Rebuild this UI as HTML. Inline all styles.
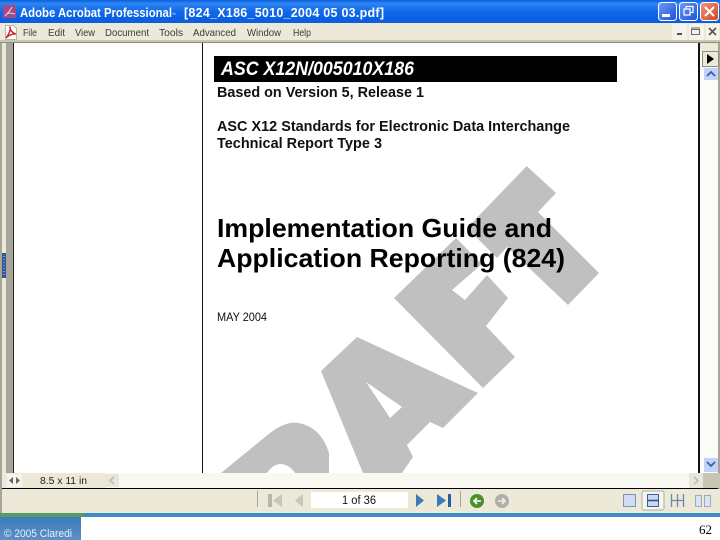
<!DOCTYPE html>
<html><head><meta charset="utf-8"><style>
html,body{margin:0;padding:0;background:#fff;width:720px;height:540px;overflow:hidden}
svg{display:block;filter:blur(.3px)}
text{font-family:"Liberation Sans",sans-serif}
</style></head><body>
<svg width="720" height="540" viewBox="0 0 720 540" xmlns="http://www.w3.org/2000/svg">
<defs>
<linearGradient id="tb" x1="0" y1="0" x2="0" y2="1"><stop offset="0" stop-color="#0a5fe0"/><stop offset=".15" stop-color="#2f86f2"/><stop offset=".5" stop-color="#0f68ea"/><stop offset="1" stop-color="#0a5cdc"/></linearGradient>
<linearGradient id="foot" x1="0" y1="0" x2="0" y2="1"><stop offset="0" stop-color="#3a7ec0"/><stop offset="1" stop-color="#5f8fc4"/></linearGradient>
<linearGradient id="btn" x1="0" y1="0" x2="1" y2="1"><stop offset="0" stop-color="#6d9cf5"/><stop offset="1" stop-color="#1e4fd8"/></linearGradient>
<linearGradient id="red" x1="0" y1="0" x2="1" y2="1"><stop offset="0" stop-color="#f0977a"/><stop offset="1" stop-color="#d0431f"/></linearGradient>
<clipPath id="may"><rect x="210" y="305" width="70" height="16"/></clipPath>
</defs>
<rect width="720" height="540" fill="#fff"/>
<!-- title bar -->
<rect width="720" height="23" fill="url(#tb)"/>
<rect x="3" y="5" width="13" height="13" fill="#a04a88"/>
<path d="M5 16C9 12 11 9 12 7M7 13C10 13 13 13 15 14" stroke="#f4d0d8" fill="none"/>
<text x="20" y="17" font-size="12.500" font-weight="bold" fill="#fff" textLength="152" lengthAdjust="spacingAndGlyphs">Adobe Acrobat Professional</text>
<text x="172" y="17" font-size="12.500" font-weight="bold" fill="#7fb0f0">-</text>
<text x="184" y="17" font-size="12.500" font-weight="bold" fill="#fff" textLength="200" lengthAdjust="spacing">[824_X186_5010_2004 05 03.pdf]</text>
<rect x="658.500" y="2.500" width="18" height="18" rx="3" fill="url(#btn)" stroke="#fff"/>
<rect x="662" y="14" width="8" height="3" fill="#fff"/>
<rect x="679.500" y="2.500" width="18" height="18" rx="3" fill="url(#btn)" stroke="#fff"/>
<path d="M684 9h6v6h-6zM686 9V6.500h7v6h-3" fill="none" stroke="#fff" stroke-width="1.200"/>
<rect x="700.500" y="2.500" width="18" height="18" rx="3" fill="url(#red)" stroke="#fff"/>
<path d="M705 7l9 9M714 7l-9 9" stroke="#fff" stroke-width="2"/>
<!-- menu bar -->
<rect y="23" width="720" height="19" fill="#ece9d8"/>
<rect y="40" width="720" height="2" fill="#c9c6b4"/>
<rect y="42" width="720" height="1" fill="#8f8c7c"/>
<path d="M5.500 25.500h8l3 3v11h-11z" fill="#fff" stroke="#b9b4a8"/>
<path d="M6 38C9 34 11 30 10 26.500 9.500 29 12 33 16 34 12 33.500 9 35 6 38Z" stroke="#d01818" fill="none" stroke-width="1.300"/>
<g font-size="10.500" fill="#3a3a3a">
<text x="23" y="36" textLength="14" lengthAdjust="spacingAndGlyphs">File</text>
<text x="48" y="36" textLength="17" lengthAdjust="spacingAndGlyphs">Edit</text>
<text x="75" y="36" textLength="20" lengthAdjust="spacingAndGlyphs">View</text>
<text x="105" y="36" textLength="44" lengthAdjust="spacingAndGlyphs">Document</text>
<text x="159" y="36" textLength="24" lengthAdjust="spacingAndGlyphs">Tools</text>
<text x="193" y="36" textLength="43" lengthAdjust="spacingAndGlyphs">Advanced</text>
<text x="247" y="36" textLength="34" lengthAdjust="spacingAndGlyphs">Window</text>
<text x="293" y="36" textLength="18" lengthAdjust="spacingAndGlyphs">Help</text>
</g>
<rect x="672" y="24" width="15" height="16" fill="#f6f4ea"/>
<rect x="689" y="24" width="15" height="16" fill="#f6f4ea"/>
<rect x="706" y="24" width="13" height="16" fill="#f6f4ea"/>
<rect x="677" y="33" width="5" height="2" fill="#555"/>
<path d="M691.500 29.500h8v5h-8zM691 28h9" fill="none" stroke="#666" stroke-width="1"/>
<path d="M709 28l7 7M716 28l-7 7" stroke="#555" stroke-width="1.600"/>
<!-- left panel -->
<rect y="43" width="14" height="446" fill="#ece9d8"/>
<rect x="0" y="43" width="2" height="470" fill="#a8a498"/>
<rect x="6" y="43" width="7" height="430" fill="#a8a498"/>
<rect x="13" y="43" width="1" height="430" fill="#222"/>
<rect x="2" y="253" width="4" height="25" fill="#2f5a98"/>
<path d="M4 256v19" stroke="#a9c4e8" stroke-dasharray="1 2"/>
<!-- watermark -->
<g fill="#c0c0c0">
<polygon points="526.700,166 556,193 538,212 599,273 568,305 507,247 497,258 467,228"/>
<polygon points="456,238 482,264 452,290 465,300 487,275 508,298 486,326 515,357 483,388 394,298"/>
<path fill-rule="evenodd" d="M357 337L478 393 443 428 430 422 407 445 413 457 402 473H363L321 371ZM366 382L402 407 390 418Z"/>
<path d="M221 473L270 433Q288 419 303 424 322 430 329 453L329 473H295Q290 465 281 464 273 464 267 473Z"/>
</g>
<!-- document -->
<rect x="202" y="43" width="1" height="430" fill="#111"/>
<rect x="214" y="56" width="403" height="26" fill="#000"/>
<text x="221" y="75" font-size="19" font-weight="bold" font-style="italic" fill="#fff" textLength="193" lengthAdjust="spacingAndGlyphs">ASC X12N/005010X186</text>
<g font-size="15" font-weight="bold" fill="#111">
<text x="217" y="97" textLength="207" lengthAdjust="spacingAndGlyphs">Based on Version 5, Release 1</text>
<text x="217" y="131" textLength="353" lengthAdjust="spacingAndGlyphs">ASC X12 Standards for Electronic Data Interchange</text>
<text x="217" y="148" textLength="165" lengthAdjust="spacingAndGlyphs">Technical Report Type 3</text>
</g>
<g font-size="26" font-weight="bold" fill="#000">
<text x="217" y="237" textLength="335" lengthAdjust="spacingAndGlyphs">Implementation Guide and</text>
<text x="217" y="267" textLength="348" lengthAdjust="spacingAndGlyphs">Application Reporting (824)</text>
</g>
<text x="217" y="321" font-size="12" fill="#111" textLength="50" lengthAdjust="spacingAndGlyphs" clip-path="url(#may)">MAY 2004</text>
<!-- right scrollbar -->
<rect x="698" y="43" width="2" height="446" fill="#111"/>
<rect x="700" y="43" width="20" height="430" fill="#fbfbf8"/>
<rect x="700" y="43" width="18" height="8" fill="#ece9d8"/>
<rect x="718" y="43" width="2" height="446" fill="#a8a498"/>
<rect x="702.500" y="51.500" width="16" height="15" fill="#ece9d8" stroke="#8f8c7c"/>
<polygon points="707,54 707,64 714,59" fill="#000"/>
<rect x="704" y="68" width="14" height="12" fill="#c1d3fb"/>
<path d="M707 76l4-4 4 4" fill="none" stroke="#3b5f9e" stroke-width="1.800"/>
<rect x="704" y="458" width="14" height="14" fill="#c1d3fb"/>
<path d="M707 462l4 4 4-4" fill="none" stroke="#3b5f9e" stroke-width="1.800"/>
<!-- horizontal scrollbar -->
<rect x="3" y="473" width="695" height="15" fill="#f9f8f2"/>
<rect x="3" y="473" width="102" height="15" fill="#ece9d8"/>
<rect x="7" y="474" width="15" height="13" fill="#f4f3ec"/>
<path d="M13 477l-4 3.500 4 3.500zM16 477l4 3.500-4 3.500z" fill="#666"/>
<text x="40" y="484" font-size="10" fill="#222" textLength="47" lengthAdjust="spacingAndGlyphs">8.5 x 11 in</text>
<rect x="105" y="474" width="14" height="13" fill="#e8e6da"/>
<path d="M114 477l-4 3.500 4 3.500" fill="none" stroke="#bbb" stroke-width="1.600"/>
<rect x="689" y="473" width="14" height="15" fill="#e8e6da"/>
<path d="M694 477l4 3.500-4 3.500" fill="none" stroke="#bbb" stroke-width="1.600"/>
<rect x="703" y="473" width="17" height="15" fill="#c8c5b5"/>
<!-- status bar -->
<rect x="2" y="489" width="718" height="24" fill="#ece9d8"/>
<rect x="2" y="488" width="716" height="1" fill="#000"/>
<rect x="0" y="473" width="2" height="40" fill="#a8a498"/>
<rect x="257" y="491" width="1" height="16" fill="#a8a498"/>
<rect x="268" y="494" width="4" height="13" fill="#b8b6a8"/>
<polygon points="282,494 282,507 273,500.500" fill="#c8c6ba"/>
<polygon points="303,494 303,507 295,500.500" fill="#c8c6ba"/>
<rect x="311" y="492" width="97" height="16" fill="#fff"/>
<text x="342" y="504" font-size="11.500" fill="#111" textLength="34" lengthAdjust="spacingAndGlyphs">1 of 36</text>
<polygon points="416,494 416,507 424,500.500" fill="#3f79b8"/>
<polygon points="437,494 437,507 446,500.500" fill="#3f79b8"/>
<rect x="448" y="494" width="3" height="13" fill="#2f5f9a"/>
<rect x="460" y="491" width="1" height="16" fill="#a8a498"/>
<circle cx="477" cy="501" r="7" fill="#4a9030"/>
<path d="M481 501h-6M477 498l-3 3 3 3" stroke="#fff" stroke-width="1.600" fill="none"/>
<circle cx="502" cy="501" r="7" fill="#b2b0a6"/>
<path d="M498 501h6M502 498l3 3-3 3" stroke="#eee" stroke-width="1.600" fill="none"/>
<rect x="623.500" y="494.500" width="12" height="12" fill="#cfdcf2" stroke="#7f94b8"/>
<rect x="642" y="491" width="22" height="19" rx="2" fill="#f6f5ee" stroke="#b0ae9f"/>
<rect x="647.500" y="494.500" width="11" height="12" fill="#c9d8f0" stroke="#3f6296"/>
<path d="M647 500.500h12" stroke="#2f5288" stroke-width="1.500"/>
<path d="M671.500 494v13M677.500 494v13M683.500 494v13M671 500.500h13" stroke="#6d88b0" stroke-width="1.300" fill="none"/>
<rect x="695.500" y="495.500" width="6" height="11" fill="#dbe3ef" stroke="#9aabc5"/>
<rect x="704.500" y="495.500" width="6" height="11" fill="#dbe3ef" stroke="#9aabc5"/>
<!-- footer -->
<rect y="513" width="720" height="4" fill="#3f8ac8"/>
<rect y="513" width="84" height="4" fill="#5a9a68"/>
<rect y="517" width="81" height="23" fill="url(#foot)"/>
<text x="4" y="537" font-size="11" fill="#e8f0f8" textLength="68" lengthAdjust="spacingAndGlyphs">© 2005 Claredi</text>
<text x="699" y="534" font-size="13" fill="#000" style="font-family:'Liberation Serif',serif">62</text>
</svg>
</body></html>
